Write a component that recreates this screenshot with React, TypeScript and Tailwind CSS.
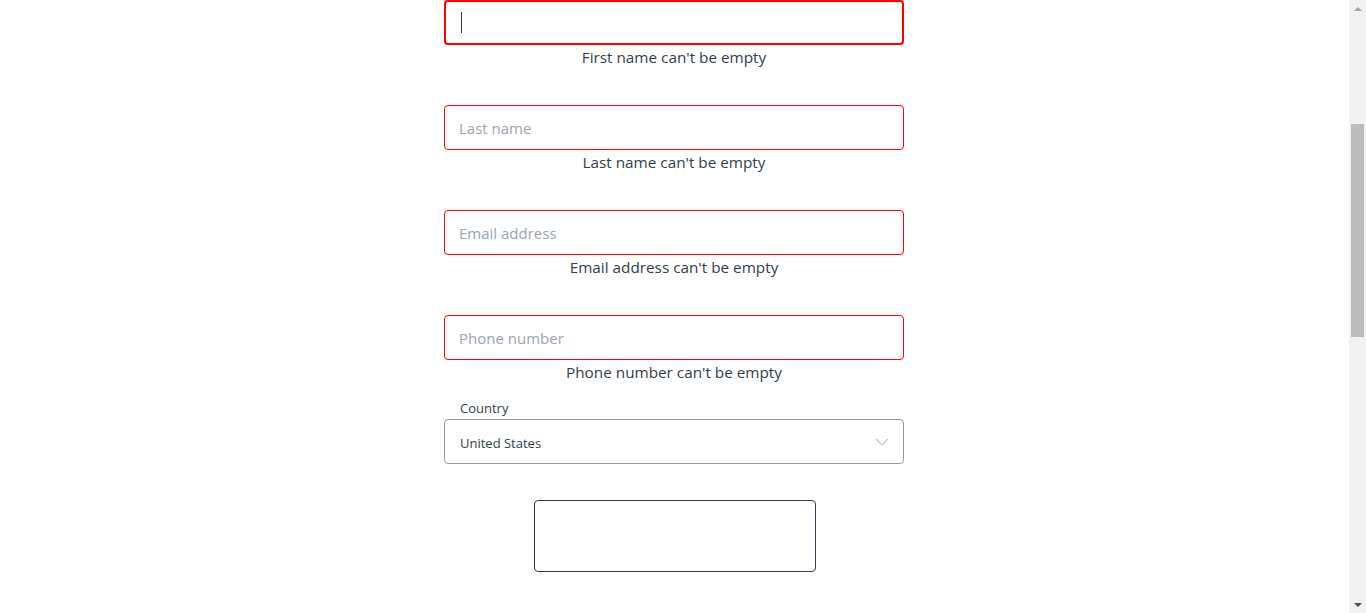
import React from 'react';

const fields = [
  { placeholder: 'Last name', error: "Last name can't be empty", gap: 'mb-[38px]' },
  { placeholder: 'Email address', error: "Email address can't be empty", gap: 'mb-[38px]' },
  { placeholder: 'Phone number', error: "Phone number can't be empty", gap: 'mb-[17px]' },
];

const font = { fontFamily: '"Open Sans", "Noto Sans", sans-serif' };

export default function App() {
  return (
    <div className="flex h-[613px] w-full overflow-hidden bg-white text-[#333e48]" style={font}>
      <main className="flex flex-1 flex-col items-center pr-px">
        <div className="flex w-[460px] flex-col">
          {/* focused first name field */}
          <div className="mb-[38px] flex flex-col">
            <div className="flex h-[45px] items-center rounded-[4px] border-2 border-[#ff0000] px-[15px]">
              <div className="h-[21px] w-px bg-[#333e48]" />
            </div>
            <p className="pt-[2px] text-center text-[15.3px] leading-[20px]">First name can't be empty</p>
          </div>

          {fields.map((f) => (
            <div key={f.placeholder} className={`flex flex-col ${f.gap}`}>
              <div className="flex h-[45px] items-center rounded-[4px] border border-[#ff0000] px-[14px] pt-[2px]">
                <span className="text-[15px] text-[#9aa6b2]">{f.placeholder}</span>
              </div>
              <p className="pt-[2px] text-center text-[15.3px] leading-[20px]">{f.error}</p>
            </div>
          ))}

          <label className="pl-4 text-[13px] leading-[18px] text-[#333e48]">Country</label>
          <div className="mt-[2px] flex h-[45px] items-center justify-between rounded-[4px] border border-[#8f9aa5] pl-[15px] pr-[14px] pt-[4px]">
            <span className="text-[13px]">United States</span>
            <svg width="14" height="8" viewBox="0 0 14 8" fill="none" className="-mt-[4px]">
              <path d="M1 1l6 6 6-6" stroke="#c3c9cf" strokeWidth="1.3" />
            </svg>
          </div>

          <div className="mt-[36px] flex justify-center pl-px">
            <div className="h-[72px] w-[282px] rounded-[4px] border border-[#2e3e50]" />
          </div>
        </div>
      </main>

      <aside className="flex w-[17px] flex-col items-center bg-[#f1f1f1]">
        <div className="flex h-[17px] items-center justify-center">
          <div className="h-0 w-0 border-x-[4px] border-b-[4px] border-x-transparent border-b-[#a3a3a3]" />
        </div>
        <div className="mt-[107px] h-[213px] w-[13px] bg-[#bcbcbc]" />
        <div className="flex-1" />
        <div className="flex h-[17px] items-center justify-center">
          <div className="h-0 w-0 border-x-[4px] border-t-[4px] border-x-transparent border-t-[#505050]" />
        </div>
      </aside>
    </div>
  );
}
